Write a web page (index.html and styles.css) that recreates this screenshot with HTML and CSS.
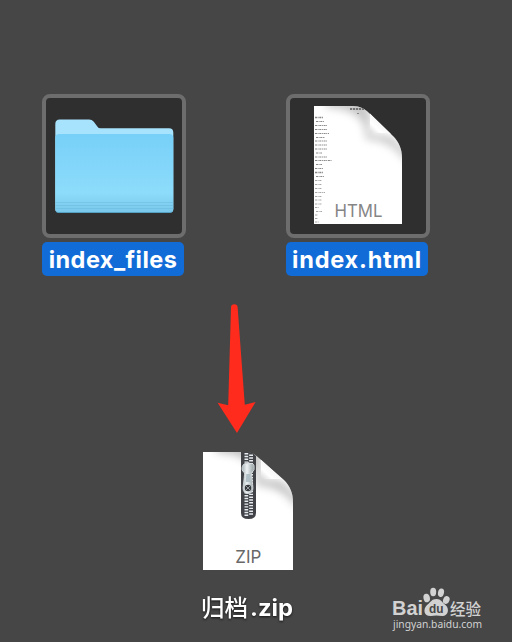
FILE: index.html
```html
<!DOCTYPE html>
<html lang="zh-CN">
<head>
<meta charset="utf-8">
<title>Desktop</title>
<link rel="stylesheet" href="styles.css">
</head>
<body>
<main class="desktop">
  <section class="row">
    <figure class="item">
      <div class="frame">
        <svg width="136" height="136" viewBox="46 98 136 136">
          <defs>
            <linearGradient id="front" x1="0" y1="0" x2="0" y2="1">
              <stop offset="0" stop-color="#77d0f8"/><stop offset=".75" stop-color="#8ddcfb"/><stop offset="1" stop-color="#79c7ea"/>
            </linearGradient>
          </defs>
          <path d="M55.300 124q0-4.500 4.500-4.500H89q3 0 4.800 2.200l3.700 5q1 1.500 3 1.500H169q4.300 0 4.300 4.300V209q0 3.500-3.500 3.500H58.800q-3.500 0-3.500-3.500z" fill="#a8e3fd"/>
          <path d="M55.300 138q0-4 4-4H169.300q4 0 4 4V209q0 3.500-3.500 3.500H58.800q-3.500 0-3.500-3.500z" fill="url(#front)"/>
          <path d="M55.300 202.500h118M55.300 205.500h118M55.300 208.500h118" stroke="#62b4d9" stroke-width=".8" opacity=".5"/>
          <path d="M56 211.600q1 .9 3 .9H169.500q2 0 3-.9" fill="none" stroke="#4f9fc4" stroke-width=".8"/>
        </svg>
      </div>
      <figcaption class="label"><span class="name name-files">index_files</span></figcaption>
    </figure>
    <figure class="item">
      <div class="frame">
        <svg width="136" height="136" viewBox="290 98 136 136">
          <defs>
            <linearGradient id="fold" x1="0" y1="1" x2=".7" y2=".3">
              <stop offset="0" stop-color="#d6d6d6"/><stop offset=".4" stop-color="#fff"/><stop offset="1" stop-color="#f1f1f1"/>
            </linearGradient>
            <filter id="soft" x="-30%" y="-30%" width="160%" height="160%"><feGaussianBlur stdDeviation="4.500"/></filter>
            <clipPath id="page"><path d="M314 106H353C360 106 365 109 369 113L393 136C399 142 402 149 402 158V224H314z"/></clipPath>
          </defs>
          <path d="M314 106H353C360 106 365 109 369 113L393 136C399 142 402 149 402 158V224H314z" fill="#fff"/>
          <g clip-path="url(#page)">
            <path d="M326 98H360L370 112V134L390 136L408 152V164C396 147 387 141 366 139C366 119 355 109 326 107z" fill="#8e8e8e" opacity=".5" filter="url(#soft)"/>
            <g stroke="#4b4b4b" stroke-width="1" stroke-dasharray="2 .6 1 .7" opacity=".65">
              <path d="M315 117.500h8M315 172.500h8" stroke-width="1.500"/>
              <path d="M316 121.500h8M315 125.500h12M315 129.500h12M315 133.500h14M316 137.500h9M315 141h12M315 145h12M315 149h12M316 153h6M315 157h12M315 160.500h17M316 164.500h6M315 168.500h8M316 176.500h8"/>
              <path d="M315 180.500h7M315 184.500h7M315 188.500h7M315 192.500h10M315 196.500h7M315 200h7M315 204h7M315 207.500h4M316 211.500h6M315 215h3M315 218.500h3M315 222h4" opacity=".75"/>
            </g>
            <path d="M350 109h14" stroke="#555" stroke-width="1.600" stroke-dasharray="2.200 .8"/>
            <path d="M357 113.500h2" stroke="#888"/>
          </g>
          <path d="M370 113.500L391 134Q386 132.500 370 132.500z" fill="url(#fold)"/>
          <text x="358.500" y="217" class="kind kind-html" text-anchor="middle" textLength="48" lengthAdjust="spacingAndGlyphs">HTML</text>
        </svg>
      </div>
      <figcaption class="label"><span class="name name-html">index.html</span></figcaption>
    </figure>
  </section>

  <svg class="arrow" width="44" height="134" viewBox="214 302 44 134">
    <path d="M231 307Q231.300 304.300 234.300 304.300T237.600 307L244.800 404.800L255.600 402L237 433L217.600 402.800L228.200 405.300z" fill="#ff2b1c"/>
  </svg>

  <figure class="archive">
    <svg width="104" height="134" viewBox="196 444 104 134">
      <defs>
        <clipPath id="zpage"><path d="M203 452H245C252 452 256 455 260 459L284 480C290 486 293 493 293 502V570H203z"/></clipPath>
        <linearGradient id="metal"><stop offset="0" stop-color="#a6b0b5"/><stop offset=".4" stop-color="#edf2f4"/><stop offset="1" stop-color="#8f999e"/></linearGradient>
      </defs>
      <path d="M203 452H245C252 452 256 455 260 459L284 480C290 486 293 493 293 502V570H203z" fill="#fff"/>
      <g clip-path="url(#zpage)">
        <path d="M216 443H251L261 458V479L281 481L299 498V510C286 492 277 487 257 485C257 464 246 454 216 452z" fill="#888" opacity=".55" filter="url(#soft)"/>
      </g>
      <path d="M241 452H247C252 452 254 454 256 456V513Q256 519 248.500 519Q241 519 241 513z" fill="#414348"/>
      <path d="M246.500 453V516M251 454.500V516" stroke="#e9edef" stroke-width="4" stroke-dasharray="1.400 1.400"/>
      <path d="M248.700 453V516" stroke="#4b4e53" stroke-width=".8"/>
      <path d="M243 465Q245 462.500 247 463.500Q248.500 461.500 250 463.500Q252.500 462.500 254 465Q255.500 470 251.500 473L253 488Q252.800 493.500 248 493.500T243 488L244.700 473Q240.200 470 243 465z" fill="url(#metal)" stroke="#e4e8ea" stroke-width=".7"/>
      <path d="M246.300 474h3.700l.8 8h-5z" fill="#b1c0c7"/>
      <circle cx="248" cy="488" r="3.200" fill="#36393d"/>
      <path d="M246 486l4 4M250 486l-4 4" stroke="#bac2c6" stroke-width=".7"/>
      <path d="M261 459.800L282 479Q277 478.800 261 479z" fill="url(#fold)"/>
      <text x="248.300" y="562.500" class="kind kind-zip" text-anchor="middle" textLength="26" lengthAdjust="spacingAndGlyphs">ZIP</text>
    </svg>
    <figcaption><svg width="112" height="40" viewBox="192 588 112 40"><g class="archive-name"><text x="201" y="616" class="archive-cjk" textLength="47" lengthAdjust="spacingAndGlyphs">归档</text><text x="250" y="616" textLength="43" lengthAdjust="spacingAndGlyphs">.zip</text></g></svg></figcaption>
  </figure>

  <svg class="watermark" width="128" height="60" viewBox="384 580 128 60">
    <text x="392" y="615" class="brand" textLength="31" lengthAdjust="spacingAndGlyphs">Bai</text>
    <g fill="#d2d2d2">
      <ellipse cx="426.700" cy="598" rx="3.200" ry="4.300" transform="rotate(-12 426.700 598)"/>
      <ellipse cx="433.200" cy="592" rx="3" ry="4.200"/>
      <ellipse cx="441" cy="592.700" rx="3" ry="4.300" transform="rotate(12 441 592.700)"/>
      <ellipse cx="446.300" cy="600" rx="3.200" ry="4.100" transform="rotate(20 446.300 600)"/>
      <path d="M436.500 599C441 599 442 602.500 445.500 605C450 609 448 616.500 442 616Q436 615 431 616C424 616.500 422.500 609.500 427 605C431 602 431.500 599 436.500 599z"/>
    </g>
    <text x="429" y="613" class="du" textLength="14.500" lengthAdjust="spacingAndGlyphs">du</text>
    <text x="450" y="614.500" class="jingyan" textLength="31" lengthAdjust="spacingAndGlyphs">经验</text>
    <text x="393" y="627.500" class="site" textLength="89" lengthAdjust="spacingAndGlyphs">jingyan.baidu.com</text>
  </svg>
</main>
</body>
</html>
```

FILE: styles.css
```css
body { margin: 0; background: #464646; }
svg { display: block; }
figure { margin: 0; }
.desktop {
  position: relative;
  box-sizing: border-box;
  width: 512px;
  height: 642px;
  padding-top: 94px;
  overflow: hidden;
  font-family: Inter, "Noto Sans CJK SC", sans-serif;
}
.row { display: flex; gap: 100px; padding-left: 42px; }
.item { width: 144px; }
.frame {
  box-sizing: border-box;
  width: 144px;
  height: 144px;
  border: 4px solid #6d6d6d;
  border-radius: 8px;
  background: #2f2f2f;
}
.label {
  display: flex;
  justify-content: center;
  width: 142px;
  height: 34px;
  margin-top: 4px;
  border-radius: 5px;
  background: #126cd7;
  color: #fff;
}
.name { font-size: 23.5px; font-weight: 650; line-height: 36px; white-space: nowrap; }
.name-files { letter-spacing: 0.45px; }
.name-html { letter-spacing: 0.8px; }
.kind { font-family: Inter, sans-serif; font-weight: 400; fill: #858585; }
.kind-html { font-size: 17.5px; }
.kind-zip { font-size: 17.5px; fill: #686868; }
.arrow { margin: 26px 0 0 214px; }
.archive { margin: 8px 0 0 196px; width: 104px; }
.archive figcaption { margin: 10px 0 0 -4px; }
.archive-name {
  font-size: 23px;
  font-weight: 700;
  fill: #fff;
  filter: drop-shadow(0 1px 1px rgba(0, 0, 0, .7));
}
.archive-cjk { font-family: "Noto Sans CJK SC", sans-serif; font-weight: 500; }
.watermark { position: absolute; right: 0; bottom: 2px; fill: #d2d2d2; }
.brand { font: 700 21px "Liberation Sans", sans-serif; }
.du { font: 700 12px "Liberation Sans", sans-serif; fill: #464646; }
.jingyan { font: 500 16px "Noto Sans CJK SC", sans-serif; }
.site { font: 11px "Noto Sans", sans-serif; }
```
